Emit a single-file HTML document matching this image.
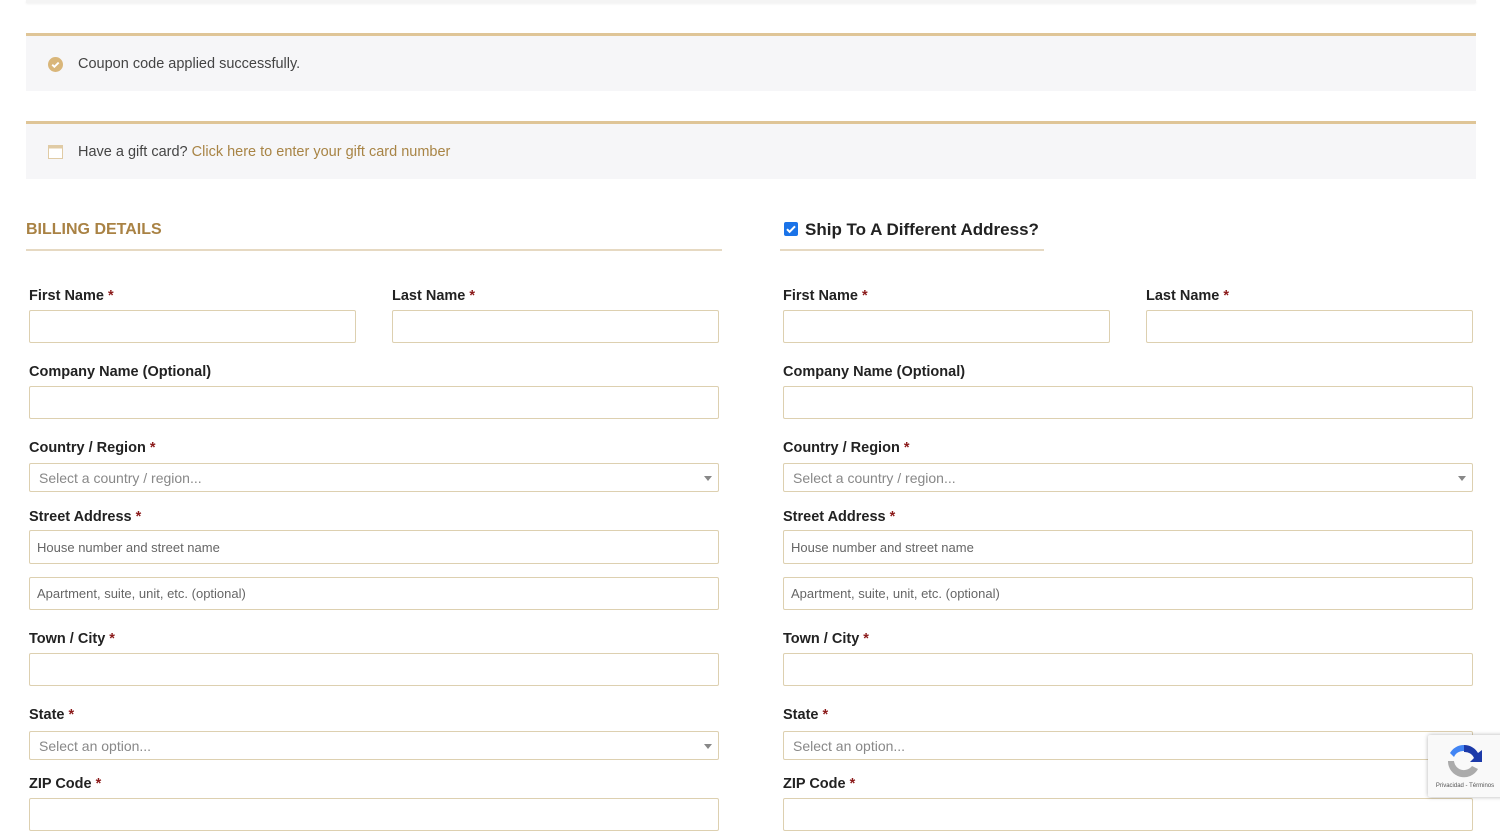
<!DOCTYPE html>
<html><head><meta charset="utf-8"><style>
*{box-sizing:border-box;margin:0;padding:0}
body{width:1500px;height:801px;overflow:hidden;background:#fff;font-family:"Liberation Sans","DejaVu Sans",sans-serif;color:#333;position:relative}
.a{position:absolute}
.topbar{left:26px;top:0;width:1450px;height:3px;background:#f4f4f4;box-shadow:0 1px 2px rgba(0,0,0,.06)}
.note{left:26px;width:1450px;background:#f6f6f8;border-top:3px solid #dfc597;font-size:14.5px;color:#444}
.note span.t{position:absolute;left:52px;top:50%;transform:translateY(-50%)}
.note a{color:#a88445;text-decoration:none}
.lbl{font-size:14.5px;font-weight:bold;color:#222;margin-top:2px}
.lbl b{color:#8b1a1a}
.in{border:1px solid #ddd0b0;border-radius:2px;background:#fff;font-size:13px;color:#666;padding-left:7px;display:flex;align-items:center}
.sel{font-size:14px;color:#888;padding-left:9px}
.sel:after{content:"";position:absolute;right:6px;top:12px;border:4px solid transparent;border-top:5px solid #888}
.h{font-size:16px;font-weight:bold}
</style></head><body>
<div class="a topbar"></div>
<div class="a note" style="top:33px;height:58px"><svg class="a" style="left:22px;top:21px" width="15" height="15" viewBox="0 0 16 16"><circle cx="8" cy="8" r="8" fill="#d9b67a"/><path d="M4.5 8.2l2.3 2.3 4.6-4.6" stroke="#fff" stroke-width="2" fill="none"/></svg><span class="t">Coupon code applied successfully.</span></div>
<div class="a note" style="top:121px;height:58px"><svg class="a" style="left:22px;top:21px" width="15" height="14" viewBox="0 0 15 14"><rect x=".5" y=".5" width="14" height="13" fill="#fff" stroke="#e0cba5"/><rect x=".5" y=".5" width="14" height="3" fill="#e0cba5"/></svg><span class="t">Have a gift card? <a>Click here to enter your gift card number</a></span></div>

<div class="a h" style="left:26px;top:221px;color:#a98244">BILLING DETAILS</div>
<div class="a" style="left:26px;top:249px;width:696px;height:2px;background:#e6d9c2"></div>
<div class="a" style="left:784px;top:222px;width:14px;height:14px;background:#1a73e8;border-radius:2px"><svg width="14" height="14" viewBox="0 0 14 14"><path d="M3 7.2l2.6 2.6L11 4.3" stroke="#fff" stroke-width="2" fill="none"/></svg></div>
<div class="a h" style="left:805px;top:220px;color:#222;font-size:17px">Ship To A Different Address?</div>
<div class="a" style="left:780px;top:249px;width:264px;height:2px;background:#e6d9c2"></div>

<!-- left column -->
<div class="a lbl" style="left:29px;top:286px">First Name <b>*</b></div>
<div class="a lbl" style="left:392px;top:286px">Last Name <b>*</b></div>
<div class="a in" style="left:29px;top:310px;width:327px;height:33px"></div>
<div class="a in" style="left:392px;top:310px;width:327px;height:33px"></div>
<div class="a lbl" style="left:29px;top:362px">Company Name (Optional)</div>
<div class="a in" style="left:29px;top:386px;width:690px;height:33px"></div>
<div class="a lbl" style="left:29px;top:438px">Country / Region <b>*</b></div>
<div class="a in sel" style="left:29px;top:463px;width:690px;height:29px">Select a country / region...</div>
<div class="a lbl" style="left:29px;top:507px">Street Address <b>*</b></div>
<div class="a in" style="left:29px;top:530px;width:690px;height:34px">House number and street name</div>
<div class="a in" style="left:29px;top:577px;width:690px;height:33px">Apartment, suite, unit, etc. (optional)</div>
<div class="a lbl" style="left:29px;top:629px">Town / City <b>*</b></div>
<div class="a in" style="left:29px;top:653px;width:690px;height:33px"></div>
<div class="a lbl" style="left:29px;top:705px">State <b>*</b></div>
<div class="a in sel" style="left:29px;top:731px;width:690px;height:29px">Select an option...</div>
<div class="a lbl" style="left:29px;top:774px">ZIP Code <b>*</b></div>
<div class="a in" style="left:29px;top:798px;width:690px;height:33px"></div>

<!-- right column -->
<div class="a lbl" style="left:783px;top:286px">First Name <b>*</b></div>
<div class="a lbl" style="left:1146px;top:286px">Last Name <b>*</b></div>
<div class="a in" style="left:783px;top:310px;width:327px;height:33px"></div>
<div class="a in" style="left:1146px;top:310px;width:327px;height:33px"></div>
<div class="a lbl" style="left:783px;top:362px">Company Name (Optional)</div>
<div class="a in" style="left:783px;top:386px;width:690px;height:33px"></div>
<div class="a lbl" style="left:783px;top:438px">Country / Region <b>*</b></div>
<div class="a in sel" style="left:783px;top:463px;width:690px;height:29px">Select a country / region...</div>
<div class="a lbl" style="left:783px;top:507px">Street Address <b>*</b></div>
<div class="a in" style="left:783px;top:530px;width:690px;height:34px">House number and street name</div>
<div class="a in" style="left:783px;top:577px;width:690px;height:33px">Apartment, suite, unit, etc. (optional)</div>
<div class="a lbl" style="left:783px;top:629px">Town / City <b>*</b></div>
<div class="a in" style="left:783px;top:653px;width:690px;height:33px"></div>
<div class="a lbl" style="left:783px;top:705px">State <b>*</b></div>
<div class="a in sel" style="left:783px;top:731px;width:690px;height:29px">Select an option...</div>
<div class="a lbl" style="left:783px;top:774px">ZIP Code <b>*</b></div>
<div class="a in" style="left:783px;top:798px;width:690px;height:33px"></div>

<!-- recaptcha -->
<div class="a" style="left:1428px;top:735px;width:80px;height:62px;background:#f9f9f9;box-shadow:0 0 4px rgba(0,0,0,.3);border-radius:2px">
<svg class="a" style="left:16px;top:6px" width="40" height="40" viewBox="0 0 40 40"><path d="M20 4a16 16 0 0 1 14 8l4-3v12H26l4-4a10 10 0 0 0-10-6z" fill="#1c3aa9"/><path d="M20 4A16 16 0 0 0 6 12l4 4a10 10 0 0 1 10-6z" fill="#4285f4"/><path d="M4 20a16 16 0 0 0 30 8l-6-3a10 10 0 0 1-18-5H4z" fill="#ababab"/></svg>
<div class="a" style="left:0;top:48px;width:74px;text-align:center;font-size:6px;color:#555">Privacidad - Términos</div>
</div>
</body></html>
